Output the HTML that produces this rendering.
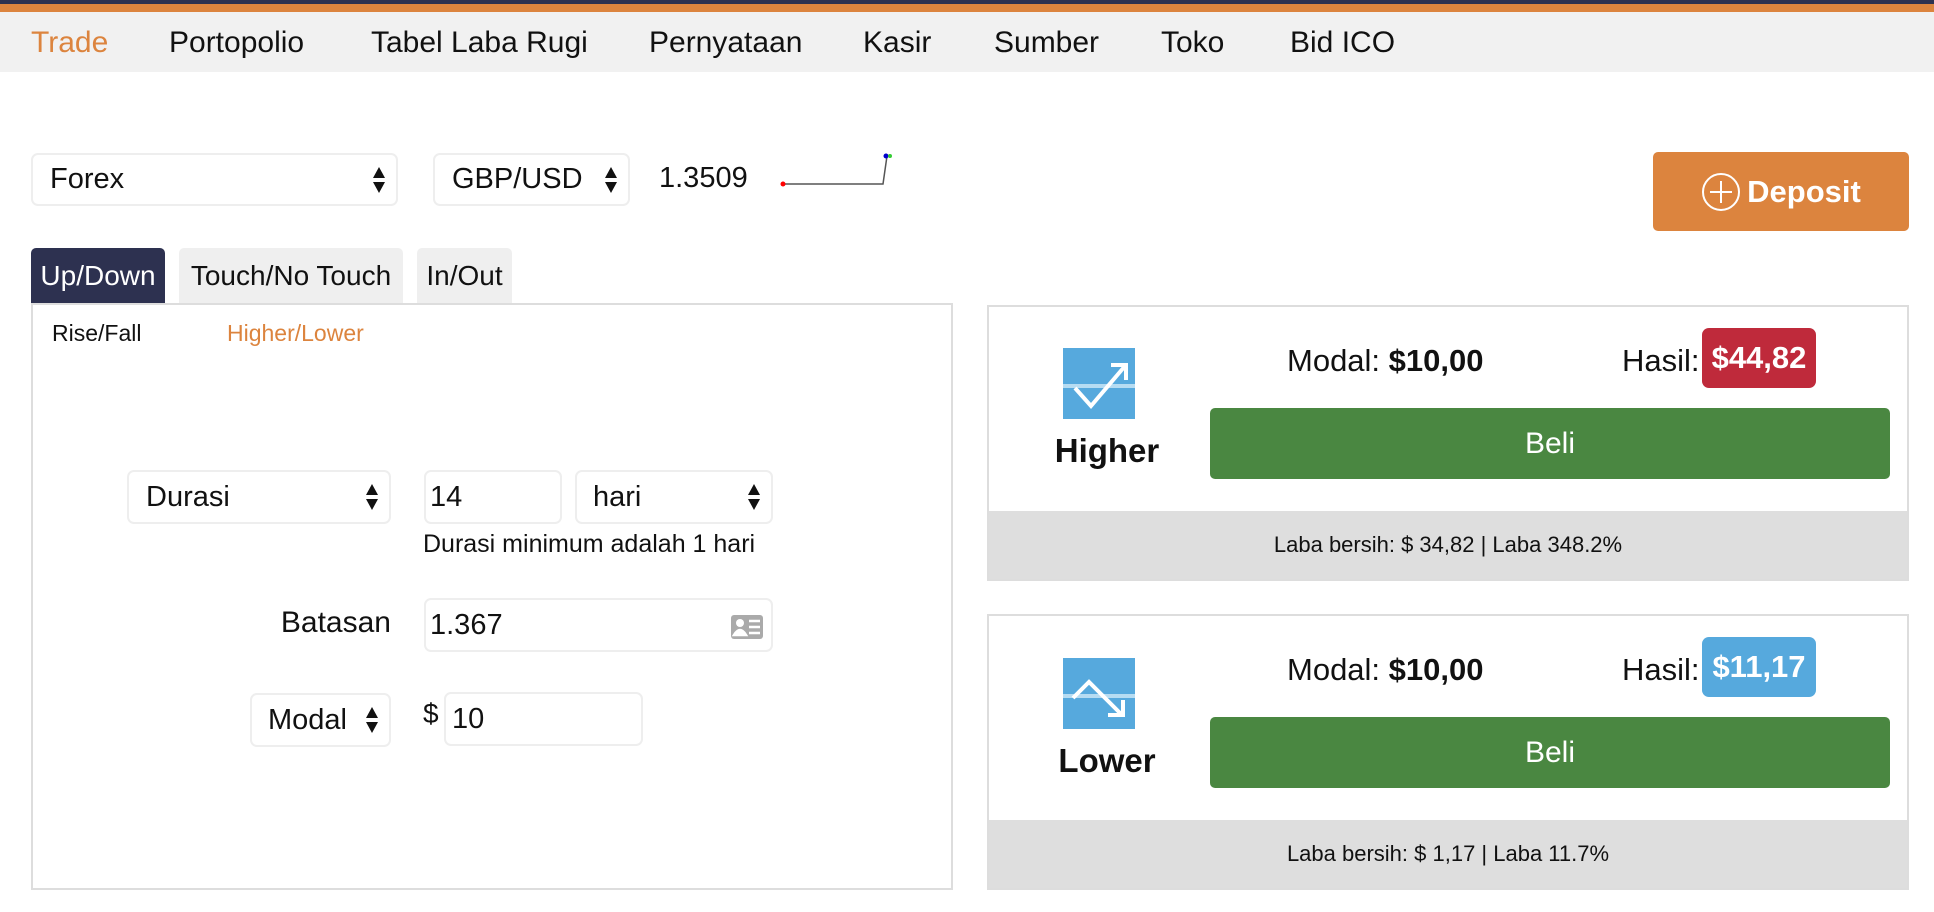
<!DOCTYPE html>
<html><head><meta charset="utf-8"><style>
*{box-sizing:border-box;margin:0;padding:0}
body{width:1934px;height:912px;position:relative;background:#fff;font-family:"Liberation Sans",Arial,sans-serif;color:#111;overflow:hidden}
.a{position:absolute}
.nav span{position:absolute;top:14px;font-size:30px;color:#111}
.box{position:absolute;border:2px solid #eee;border-radius:7px;background:#fff;font-size:29px;display:flex;align-items:center;padding-left:17px}
.arr{position:absolute;right:10px;top:50%;transform:translateY(-50%);width:14px;height:26px}
.tab{position:absolute;top:248px;height:55px;background:#efefef;border-radius:5px 5px 0 0;font-size:28px;display:flex;align-items:center;justify-content:center}
.card{position:absolute;left:987px;width:922px;border:2px solid #ddd;background:#fff}
.foot{position:absolute;left:0;right:0;bottom:0;height:68px;background:#dedede;font-size:22px;display:flex;align-items:center;justify-content:center}
.beli{position:absolute;left:221px;width:680px;height:71px;background:#4a8741;border-radius:5px;color:#fff;font-size:30px;display:flex;align-items:center;justify-content:center}
.lbl{position:absolute;font-size:31px;top:36px}
.badge{position:absolute;border-radius:7px;color:#fff;font-weight:bold;font-size:31px;display:flex;align-items:center;justify-content:center;height:60px;width:114px;top:21px;left:713px}
.ic{position:absolute;left:74px;top:41px;width:72px;height:71px;background:#56a9dd}
.nm{position:absolute;width:200px;left:18px;text-align:center;font-weight:bold;font-size:33px}
</style></head><body>
<div class="a" style="left:0;top:0;width:1934px;height:4px;background:#2d3150"></div>
<div class="a" style="left:0;top:4px;width:1934px;height:8px;background:#dc843e"></div>
<div class="a nav" style="left:0;top:12px;width:1934px;height:60px;background:#f1f1f1">
<span style="left:31px;color:#dc843e">Trade</span><span style="left:169px">Portopolio</span><span style="left:371px">Tabel Laba Rugi</span><span style="left:649px">Pernyataan</span><span style="left:863px">Kasir</span><span style="left:994px">Sumber</span><span style="left:1161px">Toko</span><span style="left:1290px">Bid ICO</span>
</div>

<svg width="0" height="0" style="position:absolute"><defs><g id="ar"><path d="M7 0L13 11H1Z M1 15H13L7 26Z" fill="#111"/></g></defs></svg>

<div class="box" style="left:31px;top:153px;width:367px;height:53px">Forex<svg class="arr" viewBox="0 0 14 26"><use href="#ar"/></svg></div>
<div class="box" style="left:433px;top:153px;width:197px;height:53px">GBP/USD<svg class="arr" viewBox="0 0 14 26"><use href="#ar"/></svg></div>
<div class="a" style="left:659px;top:162px;font-size:29px">1.3509</div>
<svg class="a" style="left:775px;top:150px" width="125" height="40"><polyline points="8,34 108,34 112,6" fill="none" stroke="#555" stroke-width="1.5"/><circle cx="8" cy="34" r="2.5" fill="red"/><circle cx="111" cy="6" r="2.5" fill="#00c"/><circle cx="115" cy="6" r="2" fill="#3c3"/></svg>

<div class="a" style="left:1653px;top:152px;width:256px;height:79px;background:#dc843e;border-radius:5px;color:#fff;font-size:31px;font-weight:bold;display:flex;align-items:center;justify-content:center">
<svg width="40" height="40" style="margin-right:6px"><circle cx="20" cy="20" r="18" fill="none" stroke="#fff" stroke-width="2"/><path d="M20 9V31M9 20H31" stroke="#fff" stroke-width="2"/></svg>Deposit</div>

<div class="tab" style="left:31px;width:134px;background:#2d3150;color:#fff">Up/Down</div>
<div class="tab" style="left:179px;width:224px">Touch/No Touch</div>
<div class="tab" style="left:417px;width:95px">In/Out</div>

<div class="a" style="left:31px;top:303px;width:922px;height:587px;border:2px solid #ddd"></div>
<div class="a" style="left:52px;top:320px;font-size:23px">Rise/Fall</div>
<div class="a" style="left:227px;top:320px;font-size:23px;color:#dc843e">Higher/Lower</div>

<div class="box" style="left:127px;top:470px;width:264px;height:54px">Durasi<svg class="arr" viewBox="0 0 14 26"><use href="#ar"/></svg></div>
<div class="box" style="left:424px;top:470px;width:138px;height:54px;padding-left:4px">14</div>
<div class="box" style="left:575px;top:470px;width:198px;height:54px;padding-left:16px">hari<svg class="arr" viewBox="0 0 14 26"><use href="#ar"/></svg></div>
<div class="a" style="left:423px;top:530px;font-size:25px">Durasi minimum adalah 1 hari</div>
<div class="a" style="left:200px;width:191px;text-align:right;top:606px;font-size:30px">Batasan</div>
<div class="box" style="left:424px;top:598px;width:349px;height:54px;padding-left:4px">1.367
<svg class="a" style="right:8px;top:15px" width="32" height="24"><rect width="32" height="24" rx="3" fill="#aaa"/><circle cx="9" cy="8" r="4" fill="#fff"/><path d="M3 20Q9 10 15 20Z M18 6H29M18 12H29M18 18H29" stroke="#fff" stroke-width="2.5" fill="#fff"/></svg></div>
<div class="box" style="left:250px;top:693px;width:141px;height:54px;padding-left:16px">Modal<svg class="arr" viewBox="0 0 14 26"><use href="#ar"/></svg></div>
<div class="a" style="left:423px;top:698px;font-size:28px">$</div>
<div class="box" style="left:444px;top:692px;width:199px;height:54px;padding-left:6px">10</div>

<div class="card" style="top:305px;height:276px">
<div class="ic"><svg width="72" height="71"><path d="M0 38H72" stroke="#b6dcf2" stroke-width="4"/><path d="M12 40L28 58L62 18" stroke="#fff" stroke-width="4" fill="none"/><path d="M48 17H63V32" stroke="#fff" stroke-width="4" fill="none"/></svg></div>
<div class="nm" style="top:125px">Higher</div>
<div class="lbl" style="left:298px">Modal: <b>$10,00</b></div>
<div class="lbl" style="left:633px">Hasil:</div>
<div class="badge" style="background:#bf2a3b">$44,82</div>
<div class="beli" style="top:101px">Beli</div>
<div class="foot">Laba bersih: $ 34,82 | Laba 348.2%</div>
</div>

<div class="card" style="top:614px;height:276px">
<div class="ic" style="top:42px"><svg width="72" height="71"><path d="M0 38H72" stroke="#b6dcf2" stroke-width="4"/><path d="M10 40L26 24L58 56" stroke="#fff" stroke-width="4" fill="none"/><path d="M45 57H60V42" stroke="#fff" stroke-width="4" fill="none"/></svg></div>
<div class="nm" style="top:126px">Lower</div>
<div class="lbl" style="left:298px">Modal: <b>$10,00</b></div>
<div class="lbl" style="left:633px">Hasil:</div>
<div class="badge" style="background:#56a9dd">$11,17</div>
<div class="beli" style="top:101px">Beli</div>
<div class="foot">Laba bersih: $ 1,17 | Laba 11.7%</div>
</div>
</body></html>
